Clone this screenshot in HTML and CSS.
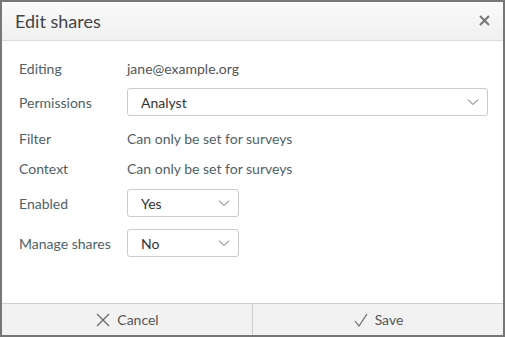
FILE: index.html
```html
<!DOCTYPE html>
<html>
<head>
    <link rel="stylesheet" href="styles.css">
    <title>Edit shares</title>
</head>
<body>
    <div class="dialog">
        <div class="dialog-header">
            <h1 class="title">Edit shares</h1>
            <svg class="close" width="11" height="11" viewBox="0 0 11 11"><path d="M1 1 L10 10 M10 1 L1 10" stroke="#777" stroke-width="2" fill="none"/></svg>
        </div>
        <div class="dialog-body">
            <div class="row row-text row-editing">
                <span class="label">Editing</span>
                <span class="value value-dark">jane@example.org</span>
            </div>
            <div class="row row-permissions">
                <span class="label">Permissions</span>
                <div class="select select-wide">
                    <span>Analyst</span>
                    <svg class="caret" width="12" height="8" viewBox="0 0 12 8"><path d="M1 1.5 L6 6.5 L11 1.5" fill="none" stroke="#666" stroke-width="1"/></svg>
                </div>
            </div>
            <div class="row row-text row-filter">
                <span class="label">Filter</span>
                <span class="value">Can only be set for surveys</span>
            </div>
            <div class="row row-text row-context">
                <span class="label">Context</span>
                <span class="value">Can only be set for surveys</span>
            </div>
            <div class="row row-enabled">
                <span class="label">Enabled</span>
                <div class="select">
                    <span>Yes</span>
                    <svg class="caret" width="12" height="8" viewBox="0 0 12 8"><path d="M1 1.5 L6 6.5 L11 1.5" fill="none" stroke="#666" stroke-width="1"/></svg>
                </div>
            </div>
            <div class="row row-manage">
                <span class="label">Manage shares</span>
                <div class="select">
                    <span>No</span>
                    <svg class="caret" width="12" height="8" viewBox="0 0 12 8"><path d="M1 1.5 L6 6.5 L11 1.5" fill="none" stroke="#666" stroke-width="1"/></svg>
                </div>
            </div>
        </div>
        <div class="dialog-footer">
            <button class="btn" type="button">
                <svg width="16" height="16" viewBox="0 0 16 16"><path d="M2 2 L14 14 M14 2 L2 14" stroke="#666" stroke-width="1.2" fill="none"/></svg>
                Cancel
            </button>
            <button class="btn" type="button">
                <svg width="16" height="16" viewBox="0 0 16 16"><path d="M2 9 L6 14 L14 2" stroke="#666" stroke-width="1.2" fill="none"/></svg>
                Save
            </button>
        </div>
    </div>
</body>
</html>
```
FILE: styles.css
```css
html, body {
    margin: 0;
    height: 100%;
}

body {
    font-family: Lato, "Open Sans", sans-serif;
    font-size: 14px;
    background: #777;
}

.dialog {
    box-sizing: border-box;
    height: 337px;
    border: 2px solid #777;
    background: #fff;
    display: flex;
    flex-direction: column;
}

.dialog-header {
    height: 38px;
    display: flex;
    align-items: center;
    justify-content: space-between;
    padding: 0 13px 0 13px;
    background: linear-gradient(#fafafa, #f0f0f0);
    border-bottom: 1px solid #ddd;
}

.title {
    margin: 0;
    font-size: 18px;
    font-weight: normal;
    color: #444;
}

.close {
    margin-top: -2px;
}

.dialog-body {
    flex: 1;
    padding: 16px 15px 0 17px;
}

.row {
    display: flex;
    align-items: center;
    height: 28px;
}

.row-text {
    height: 22px;
}

.row-permissions {
    margin-top: 9px;
}

.row-filter {
    margin-top: 11px;
}

.row-context {
    margin-top: 8px;
}

.row-enabled {
    margin-top: 10px;
}

.row-manage {
    margin-top: 12px;
}

.label {
    width: 108px;
    color: #4d6268;
}

.value {
    color: #4d6268;
}

.value-dark {
    color: #555;
}

.select {
    box-sizing: border-box;
    width: 112px;
    height: 28px;
    border: 1px solid #ccc;
    border-radius: 3px;
    display: flex;
    align-items: center;
    justify-content: space-between;
    padding: 0 8px 0 13px;
    color: #333;
}

.select-wide {
    width: 361px;
}

.dialog-footer {
    height: 31px;
    display: flex;
    background: #f2f2f2;
    border-top: 1px solid #c8d0dc;
}

.btn {
    flex: 1;
    border: none;
    background: transparent;
    font-family: inherit;
    font-size: 14px;
    color: #555;
    display: flex;
    align-items: center;
    justify-content: center;
    gap: 6px;
}

.btn + .btn {
    border-left: 1px solid #ccc;
}
```
